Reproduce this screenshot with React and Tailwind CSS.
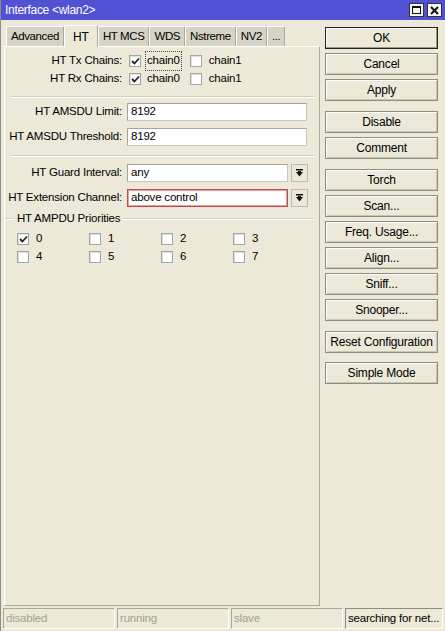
import React from 'react';

const tabs = ['Advanced', 'HT', 'HT MCS', 'WDS', 'Nstreme', 'NV2', '...'];

const buttons = [
  { label: 'OK', gap: 0, main: true },
  { label: 'Cancel', gap: 4 },
  { label: 'Apply', gap: 4 },
  { label: 'Disable', gap: 10 },
  { label: 'Comment', gap: 4 },
  { label: 'Torch', gap: 10 },
  { label: 'Scan...', gap: 4 },
  { label: 'Freq. Usage...', gap: 4 },
  { label: 'Align...', gap: 4 },
  { label: 'Sniff...', gap: 4 },
  { label: 'Snooper...', gap: 4 },
  { label: 'Reset Configuration', gap: 10 },
  { label: 'Simple Mode', gap: 9 },
];

function Check({ checked }) {
  return (
    <span className="w-[12px] h-[12px] bg-white border border-[#a5a5a5] shadow-[inset_1px_1px_0_#e0e0e0] flex items-center justify-center shrink-0">
      {checked && (
        <svg width="9" height="9" viewBox="0 0 9 9">
          <path d="M1 4 L3.5 6.5 L8 1.5" stroke="#222" strokeWidth="1.8" fill="none" />
        </svg>
      )}
    </span>
  );
}

function Label({ children }) {
  return <div className="w-[118px] text-right pr-[1px] shrink-0">{children}</div>;
}

function Input({ value, red, w = 'w-[180px]' }) {
  return (
    <div
      className={`${w} h-[18px] bg-white flex items-center px-[3px] ${
        red ? 'border border-[#c0494c] shadow-[inset_0_0_0_1px_#e3a0a2]' : 'border border-[#c9c7ba] border-t-[#a7a597] border-l-[#a7a597]'
      }`}
    >
      {value}
    </div>
  );
}

function DropBtn() {
  return (
    <div className="w-[17px] h-[18px] bg-[#ece9d8] border border-[#bdbaa8] flex items-center justify-center">
      <svg width="9" height="9" viewBox="0 0 9 9">
        <rect x="1" y="0" width="7" height="1.5" fill="#111" />
        <path d="M1 3 H8 L4.5 7.5 Z" fill="#111" />
        <rect x="3" y="2" width="3" height="2" fill="#111" />
      </svg>
    </div>
  );
}

function Sep() {
  return <div className="h-[1px] bg-[#cfcdc0] mx-[5px] border-b border-white box-content" />;
}

export default function App() {
  return (
    <div
      className="w-[445px] h-[631px] bg-[#ece9d8] flex flex-col text-[11px] text-black overflow-hidden border-l border-[#8c8c8c]"
      style={{ fontFamily: '"Liberation Sans", Arial, sans-serif' }}
    >
      {/* title bar */}
      <div className="h-[20px] bg-[#5151d3] flex items-center justify-between pl-[4px] pr-[3px] shrink-0">
        <span className="text-white text-[12px] tracking-[-0.3px]">Interface &lt;wlan2&gt;</span>
        <div className="flex gap-[3px]">
          <div className="w-[15px] h-[14px] bg-[#f4f4f4] border border-[#333] flex items-center justify-center">
            <div className="w-[9px] h-[8px] border border-[#111] border-t-2" />
          </div>
          <div className="w-[15px] h-[14px] bg-[#f4f4f4] border border-[#333] flex items-center justify-center">
            <svg width="9" height="9" viewBox="0 0 9 9">
              <path d="M1 1 L8 8 M8 1 L1 8" stroke="#111" strokeWidth="2" />
            </svg>
          </div>
        </div>
      </div>

      <div className="flex flex-1 min-h-0">
        {/* left side */}
        <div className="w-[319px] pl-[2px] flex flex-col shrink-0">
          <div className="flex items-end h-[26px] pl-[3px] pt-[4px]">
            {tabs.map(t =>
              t === 'HT' ? (
                <div key={t} className="h-[22px] px-[8px] bg-[#ece9d8] border border-b-0 border-[#ffffff] border-r-[#aca899] flex items-start pt-[2px] text-[12px] relative -mb-[1px] z-10">
                  {t}
                </div>
              ) : (
                <div key={t} className="h-[20px] px-[4px] bg-[#d6d3c4] border border-b-0 border-white border-r-[#aca899] flex items-center text-[11.5px] tracking-[-0.4px]">
                  {t}
                </div>
              )
            )}
          </div>
          <div className="flex-1 border border-white border-r-[#aca899] border-b-[#aca899] ml-[1px] mb-[1px] flex flex-col pt-[8px] text-[11.5px] tracking-[-0.2px]">
            <div className="flex items-center h-[12px] gap-[6px]">
              <Label>HT Tx Chains:</Label>
              <Check checked />
              <span className="outline outline-1 outline-dotted outline-[#444] px-[1px] ml-[-1px]">chain0</span>
              <span className="ml-[3px]"><Check /></span>
              <span className="ml-[1px]">chain1</span>
            </div>
            <div className="flex items-center h-[12px] gap-[6px] mt-[6px]">
              <Label>HT Rx Chains:</Label>
              <Check checked />
              <span>chain0</span>
              <span className="ml-[4px]"><Check /></span>
              <span className="ml-[1px]">chain1</span>
            </div>
            <div className="mt-[11px]"><Sep /></div>
            <div className="flex items-center gap-[4px] mt-[5px]">
              <Label>HT AMSDU Limit:</Label>
              <Input value="8192" />
            </div>
            <div className="flex items-center gap-[4px] mt-[7px]">
              <Label>HT AMSDU Threshold:</Label>
              <Input value="8192" />
            </div>
            <div className="mt-[9px]"><Sep /></div>
            <div className="flex items-center gap-[4px] mt-[7px]">
              <Label>HT Guard Interval:</Label>
              <Input value="any" w="w-[161px]" />
              <span className="ml-[-1px]"><DropBtn /></span>
            </div>
            <div className="flex items-center gap-[4px] mt-[7px]">
              <Label>HT Extension Channel:</Label>
              <Input value="above control" red w="w-[161px]" />
              <span className="ml-[-1px]"><DropBtn /></span>
            </div>
            <div className="flex items-center gap-[3px] mt-[6px] h-[12px]">
              <div className="w-[9px] h-[1px] bg-[#cfcdc0] border-b border-white box-content" />
              <span>HT AMPDU Priorities</span>
              <div className="flex-1 mr-[5px] h-[1px] bg-[#cfcdc0] box-content border-b border-white" />
            </div>
            <div className="grid grid-cols-[72px_72px_72px_72px] gap-y-[6px] pl-[12px] mt-[8px]">
              {[0, 1, 2, 3, 4, 5, 6, 7].map(n => (
                <div key={n} className="flex items-center gap-[7px] h-[12px]">
                  <Check checked={n === 0} />
                  <span>{n}</span>
                </div>
              ))}
            </div>
          </div>
        </div>

        {/* right buttons */}
        <div className="flex-1 flex flex-col pl-[5px] pr-[7px] pt-[7px]">
          {buttons.map(b => (
            <div
              key={b.label}
              style={{ marginTop: b.gap }}
              className={`h-[22px] shrink-0 flex items-center justify-center text-[12px] tracking-[-0.2px] bg-[#ece9d8] ${
                b.main
                  ? 'border border-[#222] shadow-[inset_-1px_-1px_0_#9d9a8a,inset_1px_1px_0_#fff]'
                  : 'border border-[#8e8c80] shadow-[inset_1px_1px_0_#fff,inset_-1px_-1px_0_#c9c6b4]'
              }`}
            >
              {b.label}
            </div>
          ))}
        </div>
      </div>

      {/* status bar */}
      <div className="h-[24px] flex gap-[2px] px-[2px] pt-[1px] pb-[2px] shrink-0 text-[11.5px] tracking-[-0.2px] whitespace-nowrap">
        {['disabled', 'running', 'slave'].map(s => (
          <div key={s} className="w-[112px] shrink-0 border border-[#aca899] border-r-white border-b-white text-[#a3a190] flex items-center px-[2px]">
            {s}
          </div>
        ))}
        <div className="flex-1 min-w-0 overflow-hidden border border-[#8e8c80] border-r-white border-b-white flex items-center px-[2px]">
          searching for net...
        </div>
      </div>
    </div>
  );
}
